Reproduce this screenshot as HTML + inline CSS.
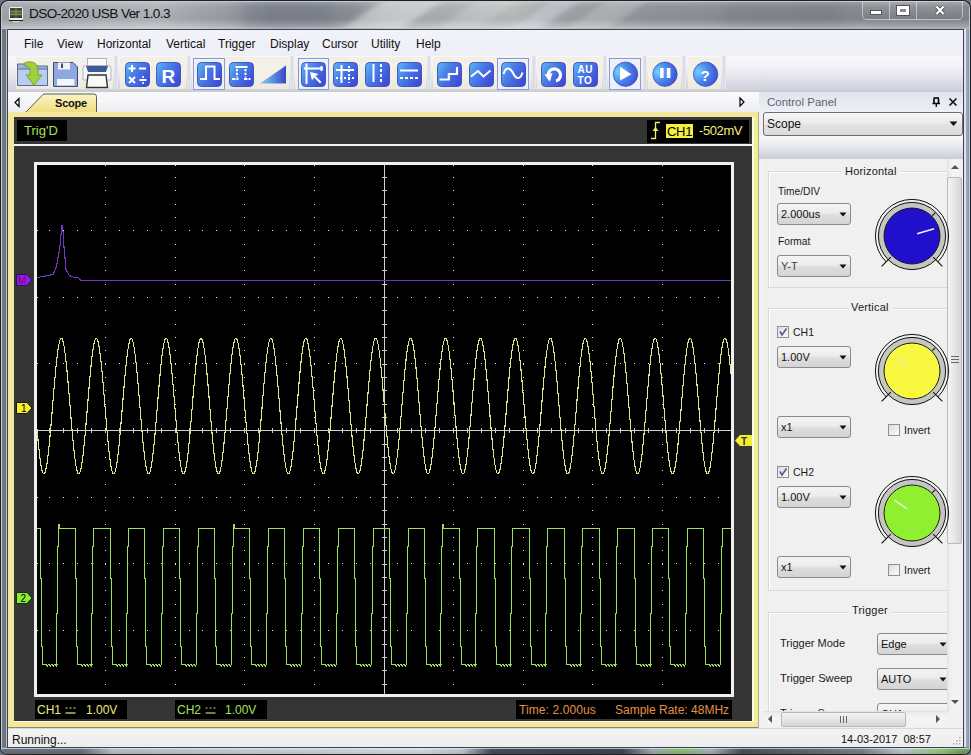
<!DOCTYPE html><html><head><meta charset="utf-8"><style>
*{margin:0;padding:0;box-sizing:border-box}
html,body{width:971px;height:755px;overflow:hidden}
body{position:relative;background:#6f7683;font-family:"Liberation Sans",sans-serif;color:#000}
.a{position:absolute}
.t{position:absolute;white-space:pre;line-height:1}
</style></head><body><div class="a" style="left:0;top:0;width:971px;height:755px;background:#1e2024;border-radius:8px 8px 7px 7px"></div>
<div class="a" style="left:1px;top:1px;width:969px;height:753px;border-radius:7px 7px 6px 6px;border:1px solid #c4c8d0;background:linear-gradient(180deg,#8d929a 0,#8d929a 28px,#70788a 40px,#76809a 100%)"></div>
<div class="a" style="left:2px;top:2px;width:967px;height:27px;border-top-left-radius:6px;border-top-right-radius:6px;background:linear-gradient(90deg,#a0a4aa 0%,#b2b5ba 16%,#9a9ea5 23%,#868b94 28%,#8a8f97 36%,#a4a7ab 40%,#b0b2b5 47%,#bbbcbc 53%,#a0a3a7 58%,#90949a 68%,#888c93 85%,#82878e 100%)"></div>
<div class="a" style="left:2px;top:2px;width:967px;height:27px;border-top-left-radius:6px;border-top-right-radius:6px;background:linear-gradient(180deg,rgba(255,255,255,.18) 0px,rgba(0,0,0,0) 5px,rgba(0,0,0,.04) 17px,rgba(255,255,255,.22) 24px,rgba(255,255,255,.35) 26px,rgba(255,255,255,.35) 27px)"></div>
<div class="a" style="left:2px;top:29px;width:5px;height:718px;background:linear-gradient(90deg,#737a86,#6a7280 70%,#c0c4cc 80%)"></div>
<div class="a" style="left:964px;top:29px;width:5px;height:718px;background:linear-gradient(90deg,#dde1ea 0,#dde1ea 1.5px,#a2adc4 2px,#8a97b2 100%)"></div>
<div class="a" style="left:2px;top:748px;width:967px;height:6px;border-radius:0 0 5px 5px;background:linear-gradient(90deg,#687080 0px,#6a7280 80px,#b8c0cc 110px,#c8d0dc 250px,#d4dce8 420px,#c0c8d4 460px,#444c5c 490px,#3e4656 620px,#a0a8b4 650px,#88c070 680px,#a8b0b8 710px,#48505c 740px,#606870 800px,#7a828c 860px,#c0c8d0 900px,#90c878 940px,#70a060 960px)"></div>
<div class="a" style="left:2px;top:748px;width:967px;height:6px;border-radius:0 0 5px 5px;background:linear-gradient(180deg,rgba(230,234,240,.7) 0,rgba(230,234,240,.7) 1px,rgba(0,0,0,0) 1px,rgba(0,0,0,.1) 100%)"></div>
<div class="a" style="left:7px;top:29px;width:957px;height:719px;border:1px solid #3c4450"></div>
<div class="a" style="left:2px;top:2px;width:967px;height:26px;overflow:hidden;border-top-left-radius:6px;border-top-right-radius:6px"><div class="a" style="left:360px;top:-4px;width:60px;height:34px;background:rgba(255,255,255,.38);transform:skewX(-55deg);filter:blur(5px)"></div><div class="a" style="left:455px;top:-4px;width:40px;height:34px;background:rgba(255,255,255,.18);transform:skewX(-55deg);filter:blur(5px)"></div><div class="a" style="left:530px;top:-4px;width:28px;height:34px;background:rgba(225,235,255,.35);transform:skewX(-55deg);filter:blur(4px)"></div><div class="a" style="left:585px;top:-4px;width:40px;height:34px;background:rgba(255,255,255,.2);transform:skewX(-55deg);filter:blur(5px)"></div><div class="a" style="left:240px;top:0px;width:90px;height:26px;background:rgba(50,60,80,.12);filter:blur(6px)"></div><div class="a" style="left:720px;top:0px;width:120px;height:26px;background:rgba(50,55,65,.1);filter:blur(8px)"></div></div>
<div class="a" style="left:9px;top:7px;width:14px;height:13px;border-radius:2px;background:#f0f0f0"></div>
<div class="a" style="left:10px;top:8px;width:12px;height:10px;background:linear-gradient(180deg,#3c4430 0%,#5a6a40 55%,#2c3424 100%)"></div>
<svg class="a" style="left:10px;top:8px" width="12" height="10"><path d="M1 3.5 H11 M1 6.5 H11 M6 0 V10" stroke="#a8b880" stroke-width="0.8" opacity="0.7"/></svg>
<div class="a" style="left:9px;top:20px;width:14px;height:1px;background:#202020"></div>
<div class="a" style="left:13px;top:21px;width:6px;height:1px;background:#d8dce0"></div>
<div class="t" style="left:29px;top:7px;font-size:13.6px;letter-spacing:-0.6px;color:#111">DSO-2020 USB Ver 1.0.3</div>
<div class="a" style="left:862px;top:1px;width:101px;height:19px;border:1px solid rgba(230,230,235,.6);border-top:none;border-radius:0 0 5px 5px;background:linear-gradient(180deg,rgba(255,255,255,.15),rgba(0,0,0,.05))"></div>
<div class="a" style="left:889px;top:1px;width:1px;height:18px;background:rgba(230,230,235,.6)"></div>
<div class="a" style="left:916px;top:1px;width:1px;height:18px;background:rgba(230,230,235,.6)"></div>
<div class="a" style="left:870px;top:10px;width:12px;height:5px;background:#fff;border:1px solid #555"></div>
<div class="a" style="left:897px;top:6px;width:12px;height:9px;border:3px solid #fff;outline:1px solid #555"></div>
<svg class="a" style="left:933px;top:4px" width="14" height="13"><path d="M3.5 2.5 L10.5 10 M10.5 2.5 L3.5 10" stroke="#4a4a4a" stroke-width="3.8"/><path d="M3.5 2.5 L10.5 10 M10.5 2.5 L3.5 10" stroke="#fff" stroke-width="2.2"/></svg>
<div class="a" style="left:8px;top:30px;width:955px;height:717px;background:#f0f0f0"></div>
<div class="a" style="left:8px;top:30px;width:955px;height:26px;background:linear-gradient(180deg,#f2f2f9,#eeeef7)"></div>
<div class="t" style="left:24px;top:38px;font-size:12px;color:#111">File</div>
<div class="t" style="left:57px;top:38px;font-size:12px;color:#111">View</div>
<div class="t" style="left:97px;top:38px;font-size:12px;color:#111">Horizontal</div>
<div class="t" style="left:166px;top:38px;font-size:12px;color:#111">Vertical</div>
<div class="t" style="left:218px;top:38px;font-size:12px;color:#111">Trigger</div>
<div class="t" style="left:270px;top:38px;font-size:12px;color:#111">Display</div>
<div class="t" style="left:322px;top:38px;font-size:12px;color:#111">Cursor</div>
<div class="t" style="left:371px;top:38px;font-size:12px;color:#111">Utility</div>
<div class="t" style="left:416px;top:38px;font-size:12px;color:#111">Help</div>
<div class="a" style="left:8px;top:56px;width:955px;height:36px;background:linear-gradient(180deg,#f8f8fb 0%,#f2f2f7 30%,#dedee8 70%,#cdcdda 100%)"></div>
<div class="a" style="left:8px;top:91px;width:955px;height:1px;background:#c4c8d2"></div>
<div class="a" style="left:16px;top:57px;width:97px;height:33px;background:linear-gradient(180deg,#f1efe6 0%,#f3f1e8 60%,#ebe8dc 100%)"></div>
<div class="a" style="left:120px;top:57px;width:66px;height:33px;background:linear-gradient(180deg,#f1efe6 0%,#f3f1e8 60%,#ebe8dc 100%)"></div>
<div class="a" style="left:192px;top:57px;width:97px;height:33px;background:linear-gradient(180deg,#f1efe6 0%,#f3f1e8 60%,#ebe8dc 100%)"></div>
<div class="a" style="left:295px;top:57px;width:131px;height:33px;background:linear-gradient(180deg,#f1efe6 0%,#f3f1e8 60%,#ebe8dc 100%)"></div>
<div class="a" style="left:433px;top:57px;width:98px;height:33px;background:linear-gradient(180deg,#f1efe6 0%,#f3f1e8 60%,#ebe8dc 100%)"></div>
<div class="a" style="left:537px;top:57px;width:65px;height:33px;background:linear-gradient(180deg,#f1efe6 0%,#f3f1e8 60%,#ebe8dc 100%)"></div>
<div class="a" style="left:608px;top:57px;width:35px;height:33px;background:linear-gradient(180deg,#f1efe6 0%,#f3f1e8 60%,#ebe8dc 100%)"></div>
<div class="a" style="left:648px;top:57px;width:33px;height:33px;background:linear-gradient(180deg,#f1efe6 0%,#f3f1e8 60%,#ebe8dc 100%)"></div>
<div class="a" style="left:688px;top:57px;width:33px;height:33px;background:linear-gradient(180deg,#f1efe6 0%,#f3f1e8 60%,#ebe8dc 100%)"></div>
<div class="a" style="left:114px;top:56px;width:4px;height:35px;background:linear-gradient(90deg,#e8e8ee,#d6d8e2 50%,#eeeef4)"></div>
<div class="a" style="left:187px;top:56px;width:4px;height:35px;background:linear-gradient(90deg,#e8e8ee,#d6d8e2 50%,#eeeef4)"></div>
<div class="a" style="left:290px;top:56px;width:4px;height:35px;background:linear-gradient(90deg,#e8e8ee,#d6d8e2 50%,#eeeef4)"></div>
<div class="a" style="left:427px;top:56px;width:4px;height:35px;background:linear-gradient(90deg,#e8e8ee,#d6d8e2 50%,#eeeef4)"></div>
<div class="a" style="left:532px;top:56px;width:4px;height:35px;background:linear-gradient(90deg,#e8e8ee,#d6d8e2 50%,#eeeef4)"></div>
<div class="a" style="left:603px;top:56px;width:4px;height:35px;background:linear-gradient(90deg,#e8e8ee,#d6d8e2 50%,#eeeef4)"></div>
<div class="a" style="left:643px;top:56px;width:4px;height:35px;background:linear-gradient(90deg,#e8e8ee,#d6d8e2 50%,#eeeef4)"></div>
<div class="a" style="left:682px;top:56px;width:4px;height:35px;background:linear-gradient(90deg,#e8e8ee,#d6d8e2 50%,#eeeef4)"></div>
<div class="a" style="left:722px;top:56px;width:4px;height:35px;background:linear-gradient(90deg,#e8e8ee,#d6d8e2 50%,#eeeef4)"></div>
<div class="a" style="left:8px;top:89px;width:955px;height:3px;background:linear-gradient(180deg,#d4d6de,#c6c8d2)"></div>
<div class="a" style="left:193px;top:58px;width:32px;height:32px;border:1px solid #8a9ae0;background:#eef0f8"></div>
<div class="a" style="left:298px;top:58px;width:31px;height:32px;border:1px solid #8a9ae0;background:#eef0f8"></div>
<div class="a" style="left:497px;top:58px;width:32px;height:32px;border:1px solid #8a9ae0;background:#eef0f8"></div>
<div class="a" style="left:609px;top:58px;width:32px;height:32px;border:1px solid #8a9ae0;background:#eef0f8"></div>
<svg class="a" style="left:0;top:0" width="971" height="100"><defs><linearGradient id="bg1" x1="0" y1="0" x2="1" y2="0.6"><stop offset="0" stop-color="#5cbaf6"/><stop offset="0.45" stop-color="#4a7ee8"/><stop offset="1" stop-color="#3d4fd8"/></linearGradient><radialGradient id="cg1" cx="0.2" cy="0.4" r="0.9"><stop offset="0" stop-color="#70d0ff"/><stop offset="0.5" stop-color="#4a80e8"/><stop offset="1" stop-color="#3a48d0"/></radialGradient><linearGradient id="ramp" x1="0" y1="0" x2="1" y2="0"><stop offset="0" stop-color="#80d0f8"/><stop offset="1" stop-color="#3848c8"/></linearGradient></defs><rect x="125.5" y="62.5" width="24" height="24" rx="4" fill="url(#bg1)" stroke="#3040b0" stroke-width="0.8"/><path d="M128.5 68.5 H135.5 M132 65 V72 M139 68.5 H146 M129 77 L135 83 M135 77 L129 83 M139.5 80 H146.5" stroke="#fff" fill="none" stroke-width="2"/><circle cx="143" cy="77" r="1.1" fill="#fff"/><circle cx="143" cy="83" r="1.1" fill="#fff"/><rect x="156.5" y="62.5" width="24" height="24" rx="4" fill="url(#bg1)" stroke="#3040b0" stroke-width="0.8"/><text x="161.5" y="83" font-family="Liberation Sans" font-weight="bold" font-size="19" fill="#fff">R</text><rect x="197.5" y="62.5" width="24" height="24" rx="4" fill="url(#bg1)" stroke="#3040b0" stroke-width="0.8"/><path d="M200 79 H206 V66.5 H214.5 V79 H220" stroke="#fff" fill="none" stroke-width="2"/><rect x="229.5" y="62.5" width="24" height="24" rx="4" fill="url(#bg1)" stroke="#3040b0" stroke-width="0.8"/><path d="M235.5 67 H247.5" stroke="#fff" fill="none" stroke-width="2"/><path d="M237 69 V77.5 M245.5 69 V77.5" stroke="#fff" fill="none" stroke-width="2" stroke-dasharray="2.2 1.6"/><path d="M232 79 H238.5 M244 79 H250.5" stroke="#fff" fill="none" stroke-width="2" stroke-dasharray="3.5 1"/><path d="M260 83.5 L286 65.5 L286 83.5 Z" fill="url(#ramp)"/><rect x="301.5" y="62.5" width="24" height="24" rx="4" fill="url(#bg1)" stroke="#3040b0" stroke-width="0.8"/><path d="M306.5 63.5 V84 M304 68.5 H323 M321.5 66 V71" stroke="#fff" fill="none" stroke-width="2"/><path d="M310 72 L318.5 74 L315.5 76 L321.5 82 L320 83.5 L314 77.5 L312 80.5 Z" fill="#fff"/><rect x="333.5" y="62.5" width="24" height="24" rx="4" fill="url(#bg1)" stroke="#3040b0" stroke-width="0.8"/><path d="M341.5 65 V83 M336 70 H354" stroke="#fff" fill="none" stroke-width="2"/><path d="M349 66 V83 M336 78 H354" stroke="#fff" fill="none" stroke-width="2" stroke-dasharray="2 2"/><rect x="365.5" y="62.5" width="24" height="24" rx="4" fill="url(#bg1)" stroke="#3040b0" stroke-width="0.8"/><path d="M373.5 64 V82" stroke="#fff" fill="none" stroke-width="2"/><path d="M381 64 V82" stroke="#fff" fill="none" stroke-width="2" stroke-dasharray="3 2"/><rect x="397.5" y="62.5" width="24" height="24" rx="4" fill="url(#bg1)" stroke="#3040b0" stroke-width="0.8"/><path d="M400 70.5 H418" stroke="#fff" fill="none" stroke-width="2"/><path d="M400 78 H418" stroke="#fff" fill="none" stroke-width="2" stroke-dasharray="3 2"/><rect x="437.5" y="62.5" width="24" height="24" rx="4" fill="url(#bg1)" stroke="#3040b0" stroke-width="0.8"/><path d="M439.5 79.5 H448.8 V74 H457 V67" stroke="#fff" fill="none" stroke-width="2.2"/><rect x="469.5" y="62.5" width="24" height="24" rx="4" fill="url(#bg1)" stroke="#3040b0" stroke-width="0.8"/><path d="M471 76.5 L478 71 L483.5 76.5 L490.5 70.5" stroke="#fff" fill="none" stroke-width="2"/><rect x="501.5" y="62.5" width="24" height="24" rx="4" fill="url(#bg1)" stroke="#3040b0" stroke-width="0.8"/><path d="M503.5 74 C505.5 67, 509.5 66.5, 513 73 C516 79.5, 520.5 80, 522.5 72.5" stroke="#fff" fill="none" stroke-width="2"/><rect x="541.5" y="62.5" width="24" height="24" rx="4" fill="url(#bg1)" stroke="#3040b0" stroke-width="0.8"/><path d="M550 79.5 A6.2 6.2 0 1 1 556 81" stroke="#fff" fill="none" stroke-width="3.2"/><path d="M544.5 74.5 L552.5 73 L550 81.5 Z" fill="#fff"/><rect x="573.5" y="62.5" width="24" height="24" rx="4" fill="url(#bg1)" stroke="#3040b0" stroke-width="0.8"/><text x="577.5" y="73" font-family="Liberation Sans" font-weight="bold" font-size="10" fill="#fff" letter-spacing="0.5">AU</text><text x="577.5" y="84" font-family="Liberation Sans" font-weight="bold" font-size="10" fill="#fff" letter-spacing="0.5">TO</text><circle cx="625.5" cy="74.2" r="12.2" fill="url(#cg1)" stroke="#3848b8" stroke-width="0.7"/><circle cx="665" cy="74.2" r="12.2" fill="url(#cg1)" stroke="#3848b8" stroke-width="0.7"/><circle cx="705.6" cy="74.2" r="12.2" fill="url(#cg1)" stroke="#3848b8" stroke-width="0.7"/><path d="M620 66.8 L631.5 74.3 L620 80.5 Z" fill="#fff"/><rect x="660" y="68" width="3.6" height="10" fill="#fff"/><rect x="666.8" y="68" width="3.6" height="10" fill="#fff"/><text x="700.5" y="80.5" font-family="Liberation Sans" font-weight="bold" font-size="15" fill="#fff">?</text><path d="M17.5 64 H28 L30 66 H47.5 V85.5 H17.5 Z" fill="#9bb4e4" stroke="#5a6c90" stroke-width="1"/><path d="M17.5 69 H47.5 V85.5 H17.5 Z" fill="#b8cdf0" stroke="#5a6c90" stroke-width="1"/><path d="M25 62.5 C33 60.5, 38 63, 38 71 V75 H42 L34 85.5 L26 75 H30 V71 C30 67, 28 66, 25 66.5 Z" fill="#9ed040" stroke="#6a9a20" stroke-width="0.8"/><path d="M53.5 62.5 H73 L77.5 67 V86.5 H53.5 Z" fill="#8fa8e0" stroke="#3c4a78" stroke-width="1"/><rect x="58" y="62.5" width="12" height="7" fill="#eef2fa"/><rect x="61" y="63.5" width="2" height="4.5" fill="#3c4a78"/><rect x="57" y="79" width="17.5" height="6.5" fill="#f4f6fb"/><rect x="87.5" y="58.5" width="19" height="8" fill="#fafafa" stroke="#9aa" stroke-width="0.8"/><path d="M83 68 Q83 65.5 86 65.5 H108 Q111 65.5 111 68 V80 H83 Z" fill="#f4f6fa" stroke="#a8aab0" stroke-width="0.8"/><path d="M86 66 H108 L106 72 H88 Z" fill="#3e5a9a"/><path d="M88 75 H106 L107.5 87.5 H86.5 Z" fill="#f8f8f8" stroke="#333" stroke-width="1.4"/></svg>
<div class="a" style="left:8px;top:92px;width:751px;height:21px;background:linear-gradient(180deg,#fafafb,#eeeef2)"></div>
<svg class="a" style="left:13px;top:97px" width="8" height="11"><path d="M6 1.5 L2 5.5 L6 9.5 Z" fill="#fff" stroke="#000" stroke-width="1.2"/></svg>
<svg class="a" style="left:737px;top:96px" width="10" height="12"><path d="M3 2 L7 6 L3 10 Z" fill="#fff" stroke="#000" stroke-width="1.2"/></svg>
<svg class="a" style="left:20px;top:93px" width="80" height="21"><defs><linearGradient id="tabg" x1="0" y1="0" x2="0" y2="1"><stop offset="0" stop-color="#fbf4c4"/><stop offset="1" stop-color="#eedc80"/></linearGradient></defs><path d="M5 20 L23 1.5 Q24 1 26 1 L74 1 Q76.5 1 76.5 3.5 L76.5 20 Z" fill="url(#tabg)" stroke="#5a5a50" stroke-width="1"/></svg>
<div class="t" style="left:55px;top:98px;font-size:11px;font-weight:bold;letter-spacing:-0.2px;color:#111">Scope</div>
<div class="a" style="left:8px;top:112px;width:751px;height:617px;background:#f2e79c"></div>
<div class="a" style="left:14px;top:117px;width:738px;height:604px;background:#353535"></div>
<div class="a" style="left:14px;top:721px;width:738px;height:1px;background:#fafae6"></div>
<div class="a" style="left:752px;top:117px;width:2px;height:605px;background:#fafae6"></div>
<div class="a" style="left:8px;top:727px;width:751px;height:1px;background:#8a8670"></div>
<div class="a" style="left:754px;top:117px;width:4px;height:605px;background:#f2f08e"></div>
<div class="a" style="left:758px;top:112px;width:1px;height:616px;background:#b0aca0"></div>
<div class="a" style="left:17px;top:120px;width:50px;height:21px;background:#000"></div>
<div class="t" style="left:24px;top:124px;font-size:13px;color:#a6e05a">Trig'D</div>
<div class="a" style="left:14px;top:144px;width:738px;height:2px;background:#f4f4f4"></div>
<div class="a" style="left:647px;top:120px;width:102px;height:23px;background:#000"></div>
<svg class="a" style="left:649px;top:121px" width="14" height="19"><path d="M2 17.5 L6.5 17.5 L6.5 1.5 L11 1.5" fill="none" stroke="#f0f070" stroke-width="1.3"/><path d="M3.5 10 L6.5 6 L9.5 10 Z" fill="#f0f070"/></svg>
<div class="a" style="left:666px;top:124px;width:27px;height:14px;background:#f4f040"></div>
<div class="t" style="left:667px;top:125px;font-size:13px;letter-spacing:-0.3px;color:#000">CH1</div>
<div class="t" style="left:699px;top:124px;font-size:13px;letter-spacing:-0.4px;color:#f0ef78">-502mV</div>
<div class="a" style="left:34px;top:162px;width:700px;height:535px;background:#000;border:3px solid #f0f0f0"></div>
<div class="a" style="left:35px;top:700px;width:92px;height:19px;background:#000"></div>
<div class="t" style="left:37px;top:704px;font-size:12px;color:#ecec78">CH1</div>
<svg class="a" style="left:64px;top:703px" width="14" height="12"><path d="M1.5 10 H11.5" stroke="#ecec78" stroke-width="1.2"/><path d="M1.5 5 H11.5" stroke="#ecec78" stroke-width="1" stroke-dasharray="2 2"/></svg>
<div class="t" style="left:86px;top:704px;font-size:12px;color:#ecec78">1.00V</div>
<div class="a" style="left:175px;top:700px;width:92px;height:19px;background:#000"></div>
<div class="t" style="left:177px;top:704px;font-size:12px;color:#a6e05a">CH2</div>
<svg class="a" style="left:204px;top:703px" width="14" height="12"><path d="M1.5 10 H11.5" stroke="#a6e05a" stroke-width="1.2"/><path d="M1.5 5 H11.5" stroke="#a6e05a" stroke-width="1" stroke-dasharray="2 2"/></svg>
<div class="t" style="left:225px;top:704px;font-size:12px;color:#a6e05a">1.00V</div>
<div class="a" style="left:516px;top:700px;width:216px;height:19px;background:#000"></div>
<div class="t" style="left:519px;top:704px;font-size:12px;letter-spacing:0.1px;color:#e0924a">Time: 2.000us</div>
<div class="t" style="left:615px;top:704px;font-size:12px;color:#e0924a">Sample Rate: 48MHz</div>
<svg class="a" style="left:0;top:0" width="971" height="755" shape-rendering="crispEdges"><path d="M105 177h1v1h-1zM105 190h1v1h-1zM105 204h1v1h-1zM105 217h1v1h-1zM105 230h1v1h-1zM105 244h1v1h-1zM105 257h1v1h-1zM105 270h1v1h-1zM105 284h1v1h-1zM105 297h1v1h-1zM105 310h1v1h-1zM105 324h1v1h-1zM105 337h1v1h-1zM105 350h1v1h-1zM105 364h1v1h-1zM105 377h1v1h-1zM105 390h1v1h-1zM105 404h1v1h-1zM105 417h1v1h-1zM105 430h1v1h-1zM105 444h1v1h-1zM105 457h1v1h-1zM105 470h1v1h-1zM105 484h1v1h-1zM105 497h1v1h-1zM105 510h1v1h-1zM105 524h1v1h-1zM105 537h1v1h-1zM105 550h1v1h-1zM105 564h1v1h-1zM105 577h1v1h-1zM105 590h1v1h-1zM105 604h1v1h-1zM105 617h1v1h-1zM105 630h1v1h-1zM105 644h1v1h-1zM105 657h1v1h-1zM105 670h1v1h-1zM105 684h1v1h-1zM175 177h1v1h-1zM175 190h1v1h-1zM175 204h1v1h-1zM175 217h1v1h-1zM175 230h1v1h-1zM175 244h1v1h-1zM175 257h1v1h-1zM175 270h1v1h-1zM175 284h1v1h-1zM175 297h1v1h-1zM175 310h1v1h-1zM175 324h1v1h-1zM175 337h1v1h-1zM175 350h1v1h-1zM175 364h1v1h-1zM175 377h1v1h-1zM175 390h1v1h-1zM175 404h1v1h-1zM175 417h1v1h-1zM175 430h1v1h-1zM175 444h1v1h-1zM175 457h1v1h-1zM175 470h1v1h-1zM175 484h1v1h-1zM175 497h1v1h-1zM175 510h1v1h-1zM175 524h1v1h-1zM175 537h1v1h-1zM175 550h1v1h-1zM175 564h1v1h-1zM175 577h1v1h-1zM175 590h1v1h-1zM175 604h1v1h-1zM175 617h1v1h-1zM175 630h1v1h-1zM175 644h1v1h-1zM175 657h1v1h-1zM175 670h1v1h-1zM175 684h1v1h-1zM244 177h1v1h-1zM244 190h1v1h-1zM244 204h1v1h-1zM244 217h1v1h-1zM244 230h1v1h-1zM244 244h1v1h-1zM244 257h1v1h-1zM244 270h1v1h-1zM244 284h1v1h-1zM244 297h1v1h-1zM244 310h1v1h-1zM244 324h1v1h-1zM244 337h1v1h-1zM244 350h1v1h-1zM244 364h1v1h-1zM244 377h1v1h-1zM244 390h1v1h-1zM244 404h1v1h-1zM244 417h1v1h-1zM244 430h1v1h-1zM244 444h1v1h-1zM244 457h1v1h-1zM244 470h1v1h-1zM244 484h1v1h-1zM244 497h1v1h-1zM244 510h1v1h-1zM244 524h1v1h-1zM244 537h1v1h-1zM244 550h1v1h-1zM244 564h1v1h-1zM244 577h1v1h-1zM244 590h1v1h-1zM244 604h1v1h-1zM244 617h1v1h-1zM244 630h1v1h-1zM244 644h1v1h-1zM244 657h1v1h-1zM244 670h1v1h-1zM244 684h1v1h-1zM314 177h1v1h-1zM314 190h1v1h-1zM314 204h1v1h-1zM314 217h1v1h-1zM314 230h1v1h-1zM314 244h1v1h-1zM314 257h1v1h-1zM314 270h1v1h-1zM314 284h1v1h-1zM314 297h1v1h-1zM314 310h1v1h-1zM314 324h1v1h-1zM314 337h1v1h-1zM314 350h1v1h-1zM314 364h1v1h-1zM314 377h1v1h-1zM314 390h1v1h-1zM314 404h1v1h-1zM314 417h1v1h-1zM314 430h1v1h-1zM314 444h1v1h-1zM314 457h1v1h-1zM314 470h1v1h-1zM314 484h1v1h-1zM314 497h1v1h-1zM314 510h1v1h-1zM314 524h1v1h-1zM314 537h1v1h-1zM314 550h1v1h-1zM314 564h1v1h-1zM314 577h1v1h-1zM314 590h1v1h-1zM314 604h1v1h-1zM314 617h1v1h-1zM314 630h1v1h-1zM314 644h1v1h-1zM314 657h1v1h-1zM314 670h1v1h-1zM314 684h1v1h-1zM453 177h1v1h-1zM453 190h1v1h-1zM453 204h1v1h-1zM453 217h1v1h-1zM453 230h1v1h-1zM453 244h1v1h-1zM453 257h1v1h-1zM453 270h1v1h-1zM453 284h1v1h-1zM453 297h1v1h-1zM453 310h1v1h-1zM453 324h1v1h-1zM453 337h1v1h-1zM453 350h1v1h-1zM453 364h1v1h-1zM453 377h1v1h-1zM453 390h1v1h-1zM453 404h1v1h-1zM453 417h1v1h-1zM453 430h1v1h-1zM453 444h1v1h-1zM453 457h1v1h-1zM453 470h1v1h-1zM453 484h1v1h-1zM453 497h1v1h-1zM453 510h1v1h-1zM453 524h1v1h-1zM453 537h1v1h-1zM453 550h1v1h-1zM453 564h1v1h-1zM453 577h1v1h-1zM453 590h1v1h-1zM453 604h1v1h-1zM453 617h1v1h-1zM453 630h1v1h-1zM453 644h1v1h-1zM453 657h1v1h-1zM453 670h1v1h-1zM453 684h1v1h-1zM523 177h1v1h-1zM523 190h1v1h-1zM523 204h1v1h-1zM523 217h1v1h-1zM523 230h1v1h-1zM523 244h1v1h-1zM523 257h1v1h-1zM523 270h1v1h-1zM523 284h1v1h-1zM523 297h1v1h-1zM523 310h1v1h-1zM523 324h1v1h-1zM523 337h1v1h-1zM523 350h1v1h-1zM523 364h1v1h-1zM523 377h1v1h-1zM523 390h1v1h-1zM523 404h1v1h-1zM523 417h1v1h-1zM523 430h1v1h-1zM523 444h1v1h-1zM523 457h1v1h-1zM523 470h1v1h-1zM523 484h1v1h-1zM523 497h1v1h-1zM523 510h1v1h-1zM523 524h1v1h-1zM523 537h1v1h-1zM523 550h1v1h-1zM523 564h1v1h-1zM523 577h1v1h-1zM523 590h1v1h-1zM523 604h1v1h-1zM523 617h1v1h-1zM523 630h1v1h-1zM523 644h1v1h-1zM523 657h1v1h-1zM523 670h1v1h-1zM523 684h1v1h-1zM592 177h1v1h-1zM592 190h1v1h-1zM592 204h1v1h-1zM592 217h1v1h-1zM592 230h1v1h-1zM592 244h1v1h-1zM592 257h1v1h-1zM592 270h1v1h-1zM592 284h1v1h-1zM592 297h1v1h-1zM592 310h1v1h-1zM592 324h1v1h-1zM592 337h1v1h-1zM592 350h1v1h-1zM592 364h1v1h-1zM592 377h1v1h-1zM592 390h1v1h-1zM592 404h1v1h-1zM592 417h1v1h-1zM592 430h1v1h-1zM592 444h1v1h-1zM592 457h1v1h-1zM592 470h1v1h-1zM592 484h1v1h-1zM592 497h1v1h-1zM592 510h1v1h-1zM592 524h1v1h-1zM592 537h1v1h-1zM592 550h1v1h-1zM592 564h1v1h-1zM592 577h1v1h-1zM592 590h1v1h-1zM592 604h1v1h-1zM592 617h1v1h-1zM592 630h1v1h-1zM592 644h1v1h-1zM592 657h1v1h-1zM592 670h1v1h-1zM592 684h1v1h-1zM662 177h1v1h-1zM662 190h1v1h-1zM662 204h1v1h-1zM662 217h1v1h-1zM662 230h1v1h-1zM662 244h1v1h-1zM662 257h1v1h-1zM662 270h1v1h-1zM662 284h1v1h-1zM662 297h1v1h-1zM662 310h1v1h-1zM662 324h1v1h-1zM662 337h1v1h-1zM662 350h1v1h-1zM662 364h1v1h-1zM662 377h1v1h-1zM662 390h1v1h-1zM662 404h1v1h-1zM662 417h1v1h-1zM662 430h1v1h-1zM662 444h1v1h-1zM662 457h1v1h-1zM662 470h1v1h-1zM662 484h1v1h-1zM662 497h1v1h-1zM662 510h1v1h-1zM662 524h1v1h-1zM662 537h1v1h-1zM662 550h1v1h-1zM662 564h1v1h-1zM662 577h1v1h-1zM662 590h1v1h-1zM662 604h1v1h-1zM662 617h1v1h-1zM662 630h1v1h-1zM662 644h1v1h-1zM662 657h1v1h-1zM662 670h1v1h-1zM662 684h1v1h-1zM49 230h1v1h-1zM63 230h1v1h-1zM77 230h1v1h-1zM91 230h1v1h-1zM105 230h1v1h-1zM119 230h1v1h-1zM133 230h1v1h-1zM147 230h1v1h-1zM161 230h1v1h-1zM175 230h1v1h-1zM189 230h1v1h-1zM202 230h1v1h-1zM216 230h1v1h-1zM230 230h1v1h-1zM244 230h1v1h-1zM258 230h1v1h-1zM272 230h1v1h-1zM286 230h1v1h-1zM300 230h1v1h-1zM314 230h1v1h-1zM328 230h1v1h-1zM342 230h1v1h-1zM356 230h1v1h-1zM370 230h1v1h-1zM384 230h1v1h-1zM397 230h1v1h-1zM411 230h1v1h-1zM425 230h1v1h-1zM439 230h1v1h-1zM453 230h1v1h-1zM467 230h1v1h-1zM481 230h1v1h-1zM495 230h1v1h-1zM509 230h1v1h-1zM523 230h1v1h-1zM537 230h1v1h-1zM551 230h1v1h-1zM565 230h1v1h-1zM578 230h1v1h-1zM592 230h1v1h-1zM606 230h1v1h-1zM620 230h1v1h-1zM634 230h1v1h-1zM648 230h1v1h-1zM662 230h1v1h-1zM676 230h1v1h-1zM690 230h1v1h-1zM704 230h1v1h-1zM718 230h1v1h-1zM49 297h1v1h-1zM63 297h1v1h-1zM77 297h1v1h-1zM91 297h1v1h-1zM105 297h1v1h-1zM119 297h1v1h-1zM133 297h1v1h-1zM147 297h1v1h-1zM161 297h1v1h-1zM175 297h1v1h-1zM189 297h1v1h-1zM202 297h1v1h-1zM216 297h1v1h-1zM230 297h1v1h-1zM244 297h1v1h-1zM258 297h1v1h-1zM272 297h1v1h-1zM286 297h1v1h-1zM300 297h1v1h-1zM314 297h1v1h-1zM328 297h1v1h-1zM342 297h1v1h-1zM356 297h1v1h-1zM370 297h1v1h-1zM384 297h1v1h-1zM397 297h1v1h-1zM411 297h1v1h-1zM425 297h1v1h-1zM439 297h1v1h-1zM453 297h1v1h-1zM467 297h1v1h-1zM481 297h1v1h-1zM495 297h1v1h-1zM509 297h1v1h-1zM523 297h1v1h-1zM537 297h1v1h-1zM551 297h1v1h-1zM565 297h1v1h-1zM578 297h1v1h-1zM592 297h1v1h-1zM606 297h1v1h-1zM620 297h1v1h-1zM634 297h1v1h-1zM648 297h1v1h-1zM662 297h1v1h-1zM676 297h1v1h-1zM690 297h1v1h-1zM704 297h1v1h-1zM718 297h1v1h-1zM49 363h1v1h-1zM63 363h1v1h-1zM77 363h1v1h-1zM91 363h1v1h-1zM105 363h1v1h-1zM119 363h1v1h-1zM133 363h1v1h-1zM147 363h1v1h-1zM161 363h1v1h-1zM175 363h1v1h-1zM189 363h1v1h-1zM202 363h1v1h-1zM216 363h1v1h-1zM230 363h1v1h-1zM244 363h1v1h-1zM258 363h1v1h-1zM272 363h1v1h-1zM286 363h1v1h-1zM300 363h1v1h-1zM314 363h1v1h-1zM328 363h1v1h-1zM342 363h1v1h-1zM356 363h1v1h-1zM370 363h1v1h-1zM384 363h1v1h-1zM397 363h1v1h-1zM411 363h1v1h-1zM425 363h1v1h-1zM439 363h1v1h-1zM453 363h1v1h-1zM467 363h1v1h-1zM481 363h1v1h-1zM495 363h1v1h-1zM509 363h1v1h-1zM523 363h1v1h-1zM537 363h1v1h-1zM551 363h1v1h-1zM565 363h1v1h-1zM578 363h1v1h-1zM592 363h1v1h-1zM606 363h1v1h-1zM620 363h1v1h-1zM634 363h1v1h-1zM648 363h1v1h-1zM662 363h1v1h-1zM676 363h1v1h-1zM690 363h1v1h-1zM704 363h1v1h-1zM718 363h1v1h-1zM49 497h1v1h-1zM63 497h1v1h-1zM77 497h1v1h-1zM91 497h1v1h-1zM105 497h1v1h-1zM119 497h1v1h-1zM133 497h1v1h-1zM147 497h1v1h-1zM161 497h1v1h-1zM175 497h1v1h-1zM189 497h1v1h-1zM202 497h1v1h-1zM216 497h1v1h-1zM230 497h1v1h-1zM244 497h1v1h-1zM258 497h1v1h-1zM272 497h1v1h-1zM286 497h1v1h-1zM300 497h1v1h-1zM314 497h1v1h-1zM328 497h1v1h-1zM342 497h1v1h-1zM356 497h1v1h-1zM370 497h1v1h-1zM384 497h1v1h-1zM397 497h1v1h-1zM411 497h1v1h-1zM425 497h1v1h-1zM439 497h1v1h-1zM453 497h1v1h-1zM467 497h1v1h-1zM481 497h1v1h-1zM495 497h1v1h-1zM509 497h1v1h-1zM523 497h1v1h-1zM537 497h1v1h-1zM551 497h1v1h-1zM565 497h1v1h-1zM578 497h1v1h-1zM592 497h1v1h-1zM606 497h1v1h-1zM620 497h1v1h-1zM634 497h1v1h-1zM648 497h1v1h-1zM662 497h1v1h-1zM676 497h1v1h-1zM690 497h1v1h-1zM704 497h1v1h-1zM718 497h1v1h-1zM49 563h1v1h-1zM63 563h1v1h-1zM77 563h1v1h-1zM91 563h1v1h-1zM105 563h1v1h-1zM119 563h1v1h-1zM133 563h1v1h-1zM147 563h1v1h-1zM161 563h1v1h-1zM175 563h1v1h-1zM189 563h1v1h-1zM202 563h1v1h-1zM216 563h1v1h-1zM230 563h1v1h-1zM244 563h1v1h-1zM258 563h1v1h-1zM272 563h1v1h-1zM286 563h1v1h-1zM300 563h1v1h-1zM314 563h1v1h-1zM328 563h1v1h-1zM342 563h1v1h-1zM356 563h1v1h-1zM370 563h1v1h-1zM384 563h1v1h-1zM397 563h1v1h-1zM411 563h1v1h-1zM425 563h1v1h-1zM439 563h1v1h-1zM453 563h1v1h-1zM467 563h1v1h-1zM481 563h1v1h-1zM495 563h1v1h-1zM509 563h1v1h-1zM523 563h1v1h-1zM537 563h1v1h-1zM551 563h1v1h-1zM565 563h1v1h-1zM578 563h1v1h-1zM592 563h1v1h-1zM606 563h1v1h-1zM620 563h1v1h-1zM634 563h1v1h-1zM648 563h1v1h-1zM662 563h1v1h-1zM676 563h1v1h-1zM690 563h1v1h-1zM704 563h1v1h-1zM718 563h1v1h-1zM49 630h1v1h-1zM63 630h1v1h-1zM77 630h1v1h-1zM91 630h1v1h-1zM105 630h1v1h-1zM119 630h1v1h-1zM133 630h1v1h-1zM147 630h1v1h-1zM161 630h1v1h-1zM175 630h1v1h-1zM189 630h1v1h-1zM202 630h1v1h-1zM216 630h1v1h-1zM230 630h1v1h-1zM244 630h1v1h-1zM258 630h1v1h-1zM272 630h1v1h-1zM286 630h1v1h-1zM300 630h1v1h-1zM314 630h1v1h-1zM328 630h1v1h-1zM342 630h1v1h-1zM356 630h1v1h-1zM370 630h1v1h-1zM384 630h1v1h-1zM397 630h1v1h-1zM411 630h1v1h-1zM425 630h1v1h-1zM439 630h1v1h-1zM453 630h1v1h-1zM467 630h1v1h-1zM481 630h1v1h-1zM495 630h1v1h-1zM509 630h1v1h-1zM523 630h1v1h-1zM537 630h1v1h-1zM551 630h1v1h-1zM565 630h1v1h-1zM578 630h1v1h-1zM592 630h1v1h-1zM606 630h1v1h-1zM620 630h1v1h-1zM634 630h1v1h-1zM648 630h1v1h-1zM662 630h1v1h-1zM676 630h1v1h-1zM690 630h1v1h-1zM704 630h1v1h-1zM718 630h1v1h-1zM105 165h1v1h-1zM175 165h1v1h-1zM244 165h1v1h-1zM314 165h1v1h-1zM453 165h1v1h-1zM523 165h1v1h-1zM592 165h1v1h-1zM662 165h1v1h-1zM37 230h1v1h-1zM37 297h1v1h-1zM37 363h1v1h-1zM37 497h1v1h-1zM37 563h1v1h-1zM37 630h1v1h-1z" fill="#e8e8e8"/><path d="M384 165h1v529h-1z M37 430h694v1h-694z M382 177h5v1h-5zM382 190h5v1h-5zM382 204h5v1h-5zM382 217h5v1h-5zM382 230h5v1h-5zM382 244h5v1h-5zM382 257h5v1h-5zM382 270h5v1h-5zM382 284h5v1h-5zM382 297h5v1h-5zM382 310h5v1h-5zM382 324h5v1h-5zM382 337h5v1h-5zM382 350h5v1h-5zM382 364h5v1h-5zM382 377h5v1h-5zM382 390h5v1h-5zM382 404h5v1h-5zM382 417h5v1h-5zM382 430h5v1h-5zM382 444h5v1h-5zM382 457h5v1h-5zM382 470h5v1h-5zM382 484h5v1h-5zM382 497h5v1h-5zM382 510h5v1h-5zM382 524h5v1h-5zM382 537h5v1h-5zM382 550h5v1h-5zM382 564h5v1h-5zM382 577h5v1h-5zM382 590h5v1h-5zM382 604h5v1h-5zM382 617h5v1h-5zM382 630h5v1h-5zM382 644h5v1h-5zM382 657h5v1h-5zM382 670h5v1h-5zM382 684h5v1h-5zM49 428h1v5h-1zM63 428h1v5h-1zM77 428h1v5h-1zM91 428h1v5h-1zM105 428h1v5h-1zM119 428h1v5h-1zM133 428h1v5h-1zM147 428h1v5h-1zM161 428h1v5h-1zM175 428h1v5h-1zM189 428h1v5h-1zM202 428h1v5h-1zM216 428h1v5h-1zM230 428h1v5h-1zM244 428h1v5h-1zM258 428h1v5h-1zM272 428h1v5h-1zM286 428h1v5h-1zM300 428h1v5h-1zM314 428h1v5h-1zM328 428h1v5h-1zM342 428h1v5h-1zM356 428h1v5h-1zM370 428h1v5h-1zM384 428h1v5h-1zM397 428h1v5h-1zM411 428h1v5h-1zM425 428h1v5h-1zM439 428h1v5h-1zM453 428h1v5h-1zM467 428h1v5h-1zM481 428h1v5h-1zM495 428h1v5h-1zM509 428h1v5h-1zM523 428h1v5h-1zM537 428h1v5h-1zM551 428h1v5h-1zM565 428h1v5h-1zM578 428h1v5h-1zM592 428h1v5h-1zM606 428h1v5h-1zM620 428h1v5h-1zM634 428h1v5h-1zM648 428h1v5h-1zM662 428h1v5h-1zM676 428h1v5h-1zM690 428h1v5h-1zM704 428h1v5h-1zM718 428h1v5h-1z" fill="#d0d0d0"/></svg>
<svg class="a" style="left:0;top:0" width="971" height="755"><defs><clipPath id="scr"><rect x="37" y="165" width="694" height="529"/></clipPath></defs><g clip-path="url(#scr)" fill="none" stroke-width="1.1" shape-rendering="crispEdges"><path d="M37,277.5 L44,276.4 L53.4,274.3 L56.6,265.8 L59.8,247.8 L61.9,225.5 L62.6,225.5 L64,246.8 L66.1,270 L69.3,275.4 L73.6,277.3 L78.9,278 L81,280.5 L731,280.5" stroke="#7038c0"/><polyline points="37.0,428.8 38.0,439.9 39.0,449.9 40.0,458.5 41.0,465.4 42.0,470.3 43.0,473.2 44.0,474.0 45.0,472.5 46.0,468.9 47.0,463.3 48.0,455.8 49.0,446.7 50.0,436.4 51.0,425.0 52.0,413.0 53.0,400.8 54.0,388.8 55.0,377.3 56.0,366.8 57.0,357.5 58.0,349.8 59.0,343.9 60.0,340.0 61.0,338.3 62.0,338.7 63.0,341.4 64.0,346.1 65.0,352.7 66.0,361.1 67.0,370.9 68.0,381.8 69.0,393.6 70.0,405.7 71.0,417.9 72.0,429.6 73.0,440.6 74.0,450.5 75.0,459.0 76.0,465.8 77.0,470.6 78.0,473.4 79.0,473.9 80.0,472.3 81.0,468.6 82.0,462.8 83.0,455.2 84.0,446.1 85.0,435.6 86.0,424.2 87.0,412.2 88.0,400.0 89.0,388.0 90.0,376.6 91.0,366.1 92.0,356.9 93.0,349.3 94.0,343.6 95.0,339.9 96.0,338.3 97.0,338.9 98.0,341.6 99.0,346.5 100.0,353.2 101.0,361.7 102.0,371.6 103.0,382.6 104.0,394.4 105.0,406.6 106.0,418.7 107.0,430.4 108.0,441.4 109.0,451.2 110.0,459.5 111.0,466.2 112.0,470.9 113.0,473.5 114.0,473.9 115.0,472.1 116.0,468.2 117.0,462.4 118.0,454.6 119.0,445.4 120.0,434.8 121.0,423.3 122.0,411.3 123.0,399.1 124.0,387.1 125.0,375.8 126.0,365.4 127.0,356.3 128.0,348.9 129.0,343.3 130.0,339.7 131.0,338.2 132.0,339.0 133.0,341.9 134.0,346.9 135.0,353.8 136.0,362.3 137.0,372.3 138.0,383.4 139.0,395.2 140.0,407.4 141.0,419.5 142.0,431.2 143.0,442.1 144.0,451.8 145.0,460.1 146.0,466.6 147.0,471.1 148.0,473.6 149.0,473.8 150.0,471.9 151.0,467.9 152.0,461.9 153.0,454.0 154.0,444.7 155.0,434.0 156.0,422.5 157.0,410.5 158.0,398.3 159.0,386.3 160.0,375.0 161.0,364.7 162.0,355.8 163.0,348.4 164.0,342.9 165.0,339.5 166.0,338.2 167.0,339.1 168.0,342.2 169.0,347.3 170.0,354.3 171.0,363.0 172.0,373.1 173.0,384.2 174.0,396.1 175.0,408.3 176.0,420.4 177.0,432.0 178.0,442.8 179.0,452.5 180.0,460.6 181.0,467.0 182.0,471.4 183.0,473.7 184.0,473.8 185.0,471.7 186.0,467.5 187.0,461.4 188.0,453.4 189.0,444.0 190.0,433.3 191.0,421.7 192.0,409.6 193.0,397.4 194.0,385.5 195.0,374.3 196.0,364.1 197.0,355.2 198.0,348.0 199.0,342.6 200.0,339.3 201.0,338.2 202.0,339.3 203.0,342.5 204.0,347.7 205.0,354.9 206.0,363.7 207.0,373.8 208.0,385.0 209.0,396.9 210.0,409.1 211.0,421.2 212.0,432.8 213.0,443.5 214.0,453.1 215.0,461.1 216.0,467.3 217.0,471.6 218.0,473.7 219.0,473.7 220.0,471.5 221.0,467.2 222.0,460.9 223.0,452.8 224.0,443.2 225.0,432.5 226.0,420.9 227.0,408.8 228.0,396.6 229.0,384.7 230.0,373.5 231.0,363.4 232.0,354.6 233.0,347.5 234.0,342.3 235.0,339.2 236.0,338.2 237.0,339.4 238.0,342.8 239.0,348.2 240.0,355.4 241.0,364.3 242.0,374.6 243.0,385.9 244.0,397.8 245.0,410.0 246.0,422.0 247.0,433.6 248.0,444.3 249.0,453.7 250.0,461.6 251.0,467.7 252.0,471.8 253.0,473.8 254.0,473.6 255.0,471.3 256.0,466.8 257.0,460.4 258.0,452.2 259.0,442.5 260.0,431.7 261.0,420.0 262.0,407.9 263.0,395.7 264.0,383.9 265.0,372.8 266.0,362.7 267.0,354.1 268.0,347.1 269.0,342.0 270.0,339.0 271.0,338.2 272.0,339.6 273.0,343.1 274.0,348.6 275.0,356.0 276.0,365.0 277.0,375.4 278.0,386.7 279.0,398.6 280.0,410.8 281.0,422.9 282.0,434.4 283.0,445.0 284.0,454.3 285.0,462.1 286.0,468.0 287.0,472.0 288.0,473.9 289.0,473.5 290.0,471.0 291.0,466.4 292.0,459.8 293.0,451.6 294.0,441.8 295.0,430.9 296.0,419.2 297.0,407.0 298.0,394.9 299.0,383.1 300.0,372.0 301.0,362.1 302.0,353.5 303.0,346.7 304.0,341.8 305.0,338.9 306.0,338.2 307.0,339.7 308.0,343.4 309.0,349.1 310.0,356.6 311.0,365.7 312.0,376.1 313.0,387.5 314.0,399.5 315.0,411.7 316.0,423.7 317.0,435.1 318.0,445.7 319.0,454.9 320.0,462.6 321.0,468.4 322.0,472.2 323.0,473.9 324.0,473.4 325.0,470.8 326.0,466.0 327.0,459.3 328.0,450.9 329.0,441.1 330.0,430.1 331.0,418.3 332.0,406.2 333.0,394.0 334.0,382.3 335.0,371.3 336.0,361.4 337.0,353.0 338.0,346.3 339.0,341.5 340.0,338.8 341.0,338.3 342.0,339.9 343.0,343.7 344.0,349.5 345.0,357.2 346.0,366.4 347.0,376.9 348.0,388.3 349.0,400.3 350.0,412.5 351.0,424.5 352.0,435.9 353.0,446.4 354.0,455.5 355.0,463.0 356.0,468.7 357.0,472.4 358.0,474.0 359.0,473.3 360.0,470.5 361.0,465.6 362.0,458.8 363.0,450.3 364.0,440.3 365.0,429.3 366.0,417.5 367.0,405.3 368.0,393.2 369.0,381.5 370.0,370.6 371.0,360.8 372.0,352.5 373.0,345.9 374.0,341.2 375.0,338.7 376.0,338.3 377.0,340.1 378.0,344.1 379.0,350.0 380.0,357.8 381.0,367.1 382.0,377.7 383.0,389.2 384.0,401.2 385.0,413.4 386.0,425.3 387.0,436.7 388.0,447.0 389.0,456.1 390.0,463.5 391.0,469.1 392.0,472.6 393.0,474.0 394.0,473.2 395.0,470.2 396.0,465.2 397.0,458.2 398.0,449.6 399.0,439.6 400.0,428.5 401.0,416.7 402.0,404.5 403.0,392.4 404.0,380.7 405.0,369.8 406.0,360.1 407.0,351.9 408.0,345.5 409.0,341.0 410.0,338.6 411.0,338.4 412.0,340.3 413.0,344.4 414.0,350.5 415.0,358.4 416.0,367.8 417.0,378.4 418.0,390.0 419.0,402.0 420.0,414.2 421.0,426.2 422.0,437.4 423.0,447.7 424.0,456.6 425.0,463.9 426.0,469.4 427.0,472.8 428.0,474.0 429.0,473.0 430.0,469.9 431.0,464.8 432.0,457.7 433.0,449.0 434.0,438.8 435.0,427.7 436.0,415.8 437.0,403.6 438.0,391.5 439.0,379.9 440.0,369.1 441.0,359.5 442.0,351.4 443.0,345.1 444.0,340.8 445.0,338.5 446.0,338.4 447.0,340.6 448.0,344.8 449.0,351.0 450.0,359.0 451.0,368.5 452.0,379.2 453.0,390.8 454.0,402.9 455.0,415.1 456.0,427.0 457.0,438.2 458.0,448.4 459.0,457.2 460.0,464.4 461.0,469.7 462.0,472.9 463.0,474.0 464.0,472.9 465.0,469.6 466.0,464.3 467.0,457.1 468.0,448.3 469.0,438.1 470.0,426.9 471.0,415.0 472.0,402.8 473.0,390.7 474.0,379.1 475.0,368.4 476.0,358.9 477.0,350.9 478.0,344.7 479.0,340.5 480.0,338.4 481.0,338.5 482.0,340.8 483.0,345.2 484.0,351.5 485.0,359.6 486.0,369.2 487.0,380.0 488.0,391.6 489.0,403.7 490.0,415.9 491.0,427.8 492.0,439.0 493.0,449.1 494.0,457.8 495.0,464.8 496.0,470.0 497.0,473.1 498.0,474.0 499.0,472.7 500.0,469.3 501.0,463.9 502.0,456.6 503.0,447.6 504.0,437.3 505.0,426.0 506.0,414.1 507.0,401.9 508.0,389.9 509.0,378.3 510.0,367.7 511.0,358.3 512.0,350.4 513.0,344.4 514.0,340.3 515.0,338.4 516.0,338.6 517.0,341.0 518.0,345.5 519.0,352.0 520.0,360.2 521.0,369.9 522.0,380.8 523.0,392.5 524.0,404.6 525.0,416.8 526.0,428.6 527.0,439.7 528.0,449.7 529.0,458.3 530.0,465.2 531.0,470.3 532.0,473.2 533.0,474.0 534.0,472.6 535.0,469.0 536.0,463.4 537.0,456.0 538.0,446.9 539.0,436.6 540.0,425.2 541.0,413.3 542.0,401.1 543.0,389.0 544.0,377.6 545.0,367.0 546.0,357.7 547.0,350.0 548.0,344.0 549.0,340.1 550.0,338.3 551.0,338.7 552.0,341.3 553.0,345.9 554.0,352.5 555.0,360.9 556.0,370.7 557.0,381.6 558.0,393.3 559.0,405.5 560.0,417.6 561.0,429.4 562.0,440.4 563.0,450.4 564.0,458.9 565.0,465.7 566.0,470.5 567.0,473.3 568.0,473.9 569.0,472.4 570.0,468.7 571.0,463.0 572.0,455.4 573.0,446.3 574.0,435.8 575.0,424.4 576.0,412.4 577.0,400.2 578.0,388.2 579.0,376.8 580.0,366.3 581.0,357.1 582.0,349.5 583.0,343.7 584.0,339.9 585.0,338.3 586.0,338.8 587.0,341.5 588.0,346.3 589.0,353.1 590.0,361.5 591.0,371.4 592.0,382.4 593.0,394.2 594.0,406.3 595.0,418.5 596.0,430.2 597.0,441.2 598.0,451.0 599.0,459.4 600.0,466.1 601.0,470.8 602.0,473.4 603.0,473.9 604.0,472.2 605.0,468.3 606.0,462.5 607.0,454.8 608.0,445.6 609.0,435.0 610.0,423.6 611.0,411.6 612.0,399.4 613.0,387.4 614.0,376.0 615.0,365.6 616.0,356.5 617.0,349.0 618.0,343.4 619.0,339.7 620.0,338.2 621.0,338.9 622.0,341.8 623.0,346.8 624.0,353.6 625.0,362.2 626.0,372.1 627.0,383.2 628.0,395.0 629.0,407.2 630.0,419.3 631.0,431.0 632.0,441.9 633.0,451.6 634.0,459.9 635.0,466.5 636.0,471.0 637.0,473.5 638.0,473.9 639.0,472.0 640.0,468.0 641.0,462.0 642.0,454.2 643.0,444.9 644.0,434.3 645.0,422.8 646.0,410.7 647.0,398.5 648.0,386.6 649.0,375.2 650.0,364.9 651.0,355.9 652.0,348.6 653.0,343.0 654.0,339.5 655.0,338.2 656.0,339.1 657.0,342.1 658.0,347.2 659.0,354.2 660.0,362.8 661.0,372.9 662.0,384.0 663.0,395.8 664.0,408.0 665.0,420.1 666.0,431.8 667.0,442.6 668.0,452.3 669.0,460.4 670.0,466.8 671.0,471.3 672.0,473.6 673.0,473.8 674.0,471.8 675.0,467.6 676.0,461.5 677.0,453.6 678.0,444.2 679.0,433.5 680.0,421.9 681.0,409.9 682.0,397.7 683.0,385.7 684.0,374.5 685.0,364.2 686.0,355.4 687.0,348.1 688.0,342.7 689.0,339.4 690.0,338.2 691.0,339.2 692.0,342.4 693.0,347.6 694.0,354.7 695.0,363.5 696.0,373.6 697.0,384.8 698.0,396.7 699.0,408.9 700.0,421.0 701.0,432.6 702.0,443.3 703.0,452.9 704.0,460.9 705.0,467.2 706.0,471.5 707.0,473.7 708.0,473.7 709.0,471.6 710.0,467.3 711.0,461.0 712.0,453.0 713.0,443.4 714.0,432.7 715.0,421.1 716.0,409.0 717.0,396.8 718.0,384.9 719.0,373.7 720.0,363.6 721.0,354.8 722.0,347.7 723.0,342.4 724.0,339.2 725.0,338.2 726.0,339.4 727.0,342.7 728.0,348.0 729.0,355.3 730.0,364.1 731.0,374.4" stroke="#dfe38e"/><path d="M37 528.5 H40.5 V578.5 H41.5 V646.5 H42.5 V664.5 H46 L47.2 666.5 L48.4 664.5 H49 L50.2 666.5 L51.4 664.5 H52 L53.2 666.5 L54.4 664.5 H55 L56.2 666.5 L57.4 664.5 H56.5 V613.5 H57.5 V546.5 H58.5 V528.5 V524.5 H59.5 V528.5 H75.5 V578.5 H76.5 V646.5 H77.5 V664.5 H81 L82.2 666.5 L83.4 664.5 H84 L85.2 666.5 L86.4 664.5 H87 L88.2 666.5 L89.4 664.5 H90 L91.2 666.5 L92.4 664.5 H91.5 V613.5 H92.5 V546.5 H93.5 V528.5 H110.5 V578.5 H111.5 V646.5 H112.5 V664.5 H116 L117.2 666.5 L118.4 664.5 H119 L120.2 666.5 L121.4 664.5 H122 L123.2 666.5 L124.4 664.5 H125 L126.2 666.5 L127.4 664.5 H126.5 V613.5 H127.5 V546.5 H128.5 V528.5 H144.5 V578.5 H145.5 V646.5 H146.5 V664.5 H150 L151.2 666.5 L152.4 664.5 H153 L154.2 666.5 L155.4 664.5 H156 L157.2 666.5 L158.4 664.5 H159 L160.2 666.5 L161.4 664.5 H161.5 V613.5 H162.5 V546.5 H163.5 V528.5 H179.5 V578.5 H180.5 V646.5 H181.5 V664.5 H185 L186.2 666.5 L187.4 664.5 H188 L189.2 666.5 L190.4 664.5 H191 L192.2 666.5 L193.4 664.5 H194 L195.2 666.5 L196.4 664.5 H196.5 V613.5 H197.5 V546.5 H198.5 V528.5 H214.5 V578.5 H215.5 V646.5 H216.5 V664.5 H220 L221.2 666.5 L222.4 664.5 H223 L224.2 666.5 L225.4 664.5 H226 L227.2 666.5 L228.4 664.5 H229 L230.2 666.5 L231.4 664.5 H231.5 V613.5 H232.5 V546.5 H233.5 V528.5 V524.5 H234.5 V528.5 H249.5 V578.5 H250.5 V646.5 H251.5 V664.5 H255 L256.2 666.5 L257.4 664.5 H258 L259.2 666.5 L260.4 664.5 H261 L262.2 666.5 L263.4 664.5 H264 L265.2 666.5 L266.4 664.5 H266.5 V613.5 H267.5 V546.5 H268.5 V528.5 H284.5 V578.5 H285.5 V646.5 H286.5 V664.5 H290 L291.2 666.5 L292.4 664.5 H293 L294.2 666.5 L295.4 664.5 H296 L297.2 666.5 L298.4 664.5 H299 L300.2 666.5 L301.4 664.5 H301.5 V613.5 H302.5 V546.5 H303.5 V528.5 H319.5 V578.5 H320.5 V646.5 H321.5 V664.5 H325 L326.2 666.5 L327.4 664.5 H328 L329.2 666.5 L330.4 664.5 H331 L332.2 666.5 L333.4 664.5 H334 L335.2 666.5 L336.4 664.5 H336.5 V613.5 H337.5 V546.5 H338.5 V528.5 H354.5 V578.5 H355.5 V646.5 H356.5 V664.5 H360 L361.2 666.5 L362.4 664.5 H363 L364.2 666.5 L365.4 664.5 H366 L367.2 666.5 L368.4 664.5 H369 L370.2 666.5 L371.4 664.5 H371.5 V613.5 H372.5 V546.5 H373.5 V528.5 H389.5 V578.5 H390.5 V646.5 H391.5 V664.5 H395 L396.2 666.5 L397.4 664.5 H398 L399.2 666.5 L400.4 664.5 H401 L402.2 666.5 L403.4 664.5 H404 L405.2 666.5 L406.4 664.5 H406.5 V613.5 H407.5 V546.5 H408.5 V528.5 H424.5 V578.5 H425.5 V646.5 H426.5 V664.5 H430 L431.2 666.5 L432.4 664.5 H433 L434.2 666.5 L435.4 664.5 H436 L437.2 666.5 L438.4 664.5 H439 L440.2 666.5 L441.4 664.5 H440.5 V613.5 H441.5 V546.5 H442.5 V528.5 V524.5 H443.5 V528.5 H459.5 V578.5 H460.5 V646.5 H461.5 V664.5 H465 L466.2 666.5 L467.4 664.5 H468 L469.2 666.5 L470.4 664.5 H471 L472.2 666.5 L473.4 664.5 H474 L475.2 666.5 L476.4 664.5 H475.5 V613.5 H476.5 V546.5 H477.5 V528.5 H494.5 V578.5 H495.5 V646.5 H496.5 V664.5 H500 L501.2 666.5 L502.4 664.5 H503 L504.2 666.5 L505.4 664.5 H506 L507.2 666.5 L508.4 664.5 H509 L510.2 666.5 L511.4 664.5 H510.5 V613.5 H511.5 V546.5 H512.5 V528.5 H529.5 V578.5 H530.5 V646.5 H531.5 V664.5 H535 L536.2 666.5 L537.4 664.5 H538 L539.2 666.5 L540.4 664.5 H541 L542.2 666.5 L543.4 664.5 H544 L545.2 666.5 L546.4 664.5 H545.5 V613.5 H546.5 V546.5 H547.5 V528.5 H564.5 V578.5 H565.5 V646.5 H566.5 V664.5 H570 L571.2 666.5 L572.4 664.5 H573 L574.2 666.5 L575.4 664.5 H576 L577.2 666.5 L578.4 664.5 H579 L580.2 666.5 L581.4 664.5 H580.5 V613.5 H581.5 V546.5 H582.5 V528.5 H599.5 V578.5 H600.5 V646.5 H601.5 V664.5 H605 L606.2 666.5 L607.4 664.5 H608 L609.2 666.5 L610.4 664.5 H611 L612.2 666.5 L613.4 664.5 H614 L615.2 666.5 L616.4 664.5 H615.5 V613.5 H616.5 V546.5 H617.5 V528.5 H634.5 V578.5 H635.5 V646.5 H636.5 V664.5 H640 L641.2 666.5 L642.4 664.5 H643 L644.2 666.5 L645.4 664.5 H646 L647.2 666.5 L648.4 664.5 H649 L650.2 666.5 L651.4 664.5 H650.5 V613.5 H651.5 V546.5 H652.5 V528.5 H668.5 V578.5 H669.5 V646.5 H670.5 V664.5 H674 L675.2 666.5 L676.4 664.5 H677 L678.2 666.5 L679.4 664.5 H680 L681.2 666.5 L682.4 664.5 H683 L684.2 666.5 L685.4 664.5 H685.5 V613.5 H686.5 V546.5 H687.5 V528.5 H703.5 V578.5 H704.5 V646.5 H705.5 V664.5 H709 L710.2 666.5 L711.4 664.5 H712 L713.2 666.5 L714.4 664.5 H715 L716.2 666.5 L717.4 664.5 H718 L719.2 666.5 L720.4 664.5 H720.5 V613.5 H721.5 V546.5 H722.5 V528.5 H731" stroke="#9ede58"/></g></svg>
<div class="a" style="left:759px;top:92px;width:204px;height:636px;background:#f0f0f0"></div>
<div class="a" style="left:759px;top:92px;width:204px;height:20px;background:linear-gradient(180deg,#dfe4ee,#edf0f6)"></div>
<div class="t" style="left:767px;top:97px;font-size:11.5px;color:#5f6670">Control Panel</div>
<svg class="a" style="left:931px;top:96px" width="11" height="12"><path d="M3 2.5 V7 M7.5 2.5 V7" stroke="#000" stroke-width="1.6" fill="none"/><path d="M2.5 2 H8" stroke="#000" stroke-width="1.6"/><path d="M1.5 7.5 H9" stroke="#000" stroke-width="1.5"/><path d="M5.25 7.5 V11" stroke="#000" stroke-width="1.3"/></svg>
<svg class="a" style="left:948px;top:97px" width="10" height="10"><path d="M1.5 1.5 L8.5 8.5 M8.5 1.5 L1.5 8.5" stroke="#111" stroke-width="1.6"/></svg>
<div class="a" style="left:763px;top:112px;width:200px;height:24px;border:1px solid #6e6e6e;border-radius:3px;background:linear-gradient(180deg,#f6f6f6 0%,#ececec 45%,#e2e2e2 55%,#dadada 100%)"></div>
<div class="t" style="left:767px;top:118px;font-size:12px;color:#111">Scope</div>
<svg class="a" style="left:949px;top:121px" width="10" height="6"><path d="M0.5 0.5 H8.5 L4.5 5 Z" fill="#111"/></svg>
<div class="a" style="left:759px;top:136px;width:204px;height:23px;background:linear-gradient(180deg,#f8f8fb 0%,#ececf2 40%,#c9cbd8 100%)"></div>
<div class="a" style="left:759px;top:159px;width:6px;height:553px;background:linear-gradient(90deg,#f2f0fa,#eef4f0 60%,#f0f0f0)"></div>
<div class="a" style="left:947px;top:159px;width:16px;height:553px;background:linear-gradient(90deg,#e8e8e8,#f4f4f4 40%,#f0f0f0)"></div>
<div class="a" style="left:947px;top:159px;width:1px;height:553px;background:#e2e2e2"></div>
<svg class="a" style="left:950px;top:164px" width="10" height="6"><path d="M1 5 L5 1 L9 5 Z" fill="#555"/></svg>
<svg class="a" style="left:950px;top:699px" width="10" height="6"><path d="M1 1 L5 5 L9 1 Z" fill="#555"/></svg>
<div class="a" style="left:947px;top:177px;width:15px;height:367px;border:1px solid #b8b8b8;border-radius:2px;background:linear-gradient(90deg,#f4f4f4,#e6e6e6 50%,#d6d6d6)"></div>
<svg class="a" style="left:950px;top:355px" width="10" height="9"><path d="M1 1.5 H9 M1 4.5 H9 M1 7.5 H9" stroke="#666" stroke-width="1"/></svg>
<div class="a" style="left:763px;top:711px;width:184px;height:17px;background:linear-gradient(180deg,#e8e8e8,#f4f4f4 40%,#f0f0f0)"></div>
<div class="a" style="left:763px;top:711px;width:184px;height:1px;background:#e2e2e2"></div>
<svg class="a" style="left:767px;top:714px" width="7" height="10"><path d="M5 1 L1 5 L5 9 Z" fill="#555"/></svg>
<svg class="a" style="left:935px;top:714px" width="7" height="10"><path d="M1 1 L5 5 L1 9 Z" fill="#555"/></svg>
<div class="a" style="left:781px;top:712px;width:125px;height:15px;border:1px solid #b8b8b8;border-radius:2px;background:linear-gradient(180deg,#f4f4f4,#e6e6e6 50%,#d6d6d6)"></div>
<svg class="a" style="left:839px;top:715px" width="9" height="9"><path d="M1.5 1 V8 M4.5 1 V8 M7.5 1 V8" stroke="#666" stroke-width="1"/></svg>
<div class="a" style="left:764px;top:159px;width:183px;height:552px;overflow:hidden">
<div class="a" style="left:4px;top:12px;width:179px;height:117px;border:1px solid #d8d8d8;border-right:none;box-shadow:inset 1px 1px 0 #fff"></div><div class="t" style="left:77px;top:7px;font-size:11px;letter-spacing:0.2px;color:#1a1a1a;padding:0 4px;background:#f0f0f0">Horizontal</div>
<div class="a" style="left:4px;top:149px;width:179px;height:283px;border:1px solid #d8d8d8;border-right:none;box-shadow:inset 1px 1px 0 #fff"></div><div class="t" style="left:83px;top:143px;font-size:11px;letter-spacing:0.2px;color:#1a1a1a;padding:0 4px;background:#f0f0f0">Vertical</div>
<div class="a" style="left:4px;top:453px;width:179px;height:148px;border:1px solid #d8d8d8;border-right:none;box-shadow:inset 1px 1px 0 #fff"></div><div class="t" style="left:84px;top:446px;font-size:11px;letter-spacing:0.2px;color:#1a1a1a;padding:0 4px;background:#f0f0f0">Trigger</div>
<div class="t" style="left:14px;top:28px;font-size:10.2px;color:#1a1a1a">Time/DIV</div>
<div class="a" style="left:13px;top:44px;width:74px;height:22px;border:1px solid #8a8a8a;border-radius:3px;background:linear-gradient(180deg,#f4f4f4 0%,#ececec 45%,#dddddd 55%,#d4d4d4 100%)"></div><div class="t" style="left:17px;top:50px;font-size:11px;color:#111">2.000us</div><svg class="a" style="left:75px;top:53px" width="9" height="6"><path d="M0.5 0.5 H7.5 L4 4.5 Z" fill="#111"/></svg>
<div class="t" style="left:14px;top:78px;font-size:10.2px;color:#1a1a1a">Format</div>
<div class="a" style="left:13px;top:96px;width:74px;height:22px;border:1px solid #8a8a8a;border-radius:3px;background:linear-gradient(180deg,#f4f4f4 0%,#ececec 45%,#dddddd 55%,#d4d4d4 100%)"></div><div class="t" style="left:17px;top:102px;font-size:11px;color:#444">Y-T</div><svg class="a" style="left:75px;top:105px" width="9" height="6"><path d="M0.5 0.5 H7.5 L4 4.5 Z" fill="#111"/></svg>
<div class="a" style="left:13px;top:167px;width:12px;height:12px;border:1px solid #8e8f8f;background:linear-gradient(135deg,#dcdcdc,#fbfbfb)"></div><svg class="a" style="left:13px;top:167px" width="12" height="12"><path d="M3 5.5 L5 9 L9.5 2.5" fill="none" stroke="#4a5f97" stroke-width="1.6"/></svg>
<div class="t" style="left:29px;top:168px;font-size:10.5px;color:#1a1a1a">CH1</div>
<div class="a" style="left:13px;top:187px;width:74px;height:22px;border:1px solid #8a8a8a;border-radius:3px;background:linear-gradient(180deg,#f4f4f4 0%,#ececec 45%,#dddddd 55%,#d4d4d4 100%)"></div><div class="t" style="left:17px;top:193px;font-size:11px;color:#111">1.00V</div><svg class="a" style="left:75px;top:196px" width="9" height="6"><path d="M0.5 0.5 H7.5 L4 4.5 Z" fill="#111"/></svg>
<div class="a" style="left:13px;top:257px;width:74px;height:22px;border:1px solid #8a8a8a;border-radius:3px;background:linear-gradient(180deg,#f4f4f4 0%,#ececec 45%,#dddddd 55%,#d4d4d4 100%)"></div><div class="t" style="left:17px;top:263px;font-size:11px;color:#111">x1</div><svg class="a" style="left:75px;top:266px" width="9" height="6"><path d="M0.5 0.5 H7.5 L4 4.5 Z" fill="#111"/></svg>
<div class="a" style="left:124px;top:265px;width:12px;height:12px;border:1px solid #8e8f8f;background:linear-gradient(135deg,#dcdcdc,#fbfbfb)"></div>
<div class="t" style="left:140px;top:266px;font-size:10.5px;color:#1a1a1a">Invert</div>
<div class="a" style="left:13px;top:307px;width:12px;height:12px;border:1px solid #8e8f8f;background:linear-gradient(135deg,#dcdcdc,#fbfbfb)"></div><svg class="a" style="left:13px;top:307px" width="12" height="12"><path d="M3 5.5 L5 9 L9.5 2.5" fill="none" stroke="#4a5f97" stroke-width="1.6"/></svg>
<div class="t" style="left:29px;top:308px;font-size:10.5px;color:#1a1a1a">CH2</div>
<div class="a" style="left:13px;top:327px;width:74px;height:22px;border:1px solid #8a8a8a;border-radius:3px;background:linear-gradient(180deg,#f4f4f4 0%,#ececec 45%,#dddddd 55%,#d4d4d4 100%)"></div><div class="t" style="left:17px;top:333px;font-size:11px;color:#111">1.00V</div><svg class="a" style="left:75px;top:336px" width="9" height="6"><path d="M0.5 0.5 H7.5 L4 4.5 Z" fill="#111"/></svg>
<div class="a" style="left:13px;top:397px;width:74px;height:22px;border:1px solid #8a8a8a;border-radius:3px;background:linear-gradient(180deg,#f4f4f4 0%,#ececec 45%,#dddddd 55%,#d4d4d4 100%)"></div><div class="t" style="left:17px;top:403px;font-size:11px;color:#111">x1</div><svg class="a" style="left:75px;top:406px" width="9" height="6"><path d="M0.5 0.5 H7.5 L4 4.5 Z" fill="#111"/></svg>
<div class="a" style="left:124px;top:405px;width:12px;height:12px;border:1px solid #8e8f8f;background:linear-gradient(135deg,#dcdcdc,#fbfbfb)"></div>
<div class="t" style="left:140px;top:406px;font-size:10.5px;color:#1a1a1a">Invert</div>
<div class="t" style="left:16px;top:479px;font-size:11px;color:#1a1a1a">Trigger Mode</div>
<div class="a" style="left:113px;top:474px;width:74px;height:22px;border:1px solid #8a8a8a;border-radius:3px;background:linear-gradient(180deg,#f4f4f4 0%,#ececec 45%,#dddddd 55%,#d4d4d4 100%)"></div><div class="t" style="left:117px;top:480px;font-size:11px;color:#111">Edge</div><svg class="a" style="left:175px;top:483px" width="9" height="6"><path d="M0.5 0.5 H7.5 L4 4.5 Z" fill="#111"/></svg>
<div class="t" style="left:16px;top:514px;font-size:11.2px;color:#1a1a1a">Trigger Sweep</div>
<div class="a" style="left:113px;top:509px;width:74px;height:22px;border:1px solid #8a8a8a;border-radius:3px;background:linear-gradient(180deg,#f4f4f4 0%,#ececec 45%,#dddddd 55%,#d4d4d4 100%)"></div><div class="t" style="left:117px;top:515px;font-size:11px;color:#111">AUTO</div><svg class="a" style="left:175px;top:518px" width="9" height="6"><path d="M0.5 0.5 H7.5 L4 4.5 Z" fill="#111"/></svg>
<div class="t" style="left:16px;top:549px;font-size:11px;color:#1a1a1a">Trigger Source</div>
<div class="a" style="left:113px;top:544px;width:74px;height:22px;border:1px solid #8a8a8a;border-radius:3px;background:linear-gradient(180deg,#f4f4f4 0%,#ececec 45%,#dddddd 55%,#d4d4d4 100%)"></div><div class="t" style="left:117px;top:550px;font-size:11px;color:#111">CH1</div><svg class="a" style="left:175px;top:553px" width="9" height="6"><path d="M0.5 0.5 H7.5 L4 4.5 Z" fill="#111"/></svg>
</div>
<svg class="a" style="left:866.5px;top:191px" width="90" height="90" viewBox="866.5 191 90 90"><path d="M885.62 261.88 A36.6 36.6 0 1 1 937.38 261.88" fill="none" stroke="#111" stroke-width="1"/><circle cx="911.5" cy="236" r="30.9" fill="none" stroke="#c6c6c0" stroke-width="5.2"/><circle cx="911.5" cy="236" r="33.6" fill="none" stroke="#111" stroke-width="1"/><circle cx="911.5" cy="236" r="28" fill="#2010cc" stroke="#141414" stroke-width="1"/><path d="M890.3 257.2 L881.1 266.4" stroke="#111" stroke-width="1.1"/><path d="M932.7 257.2 L941.9 266.4" stroke="#111" stroke-width="1.1"/><path d="M931.7 215.8 L934.8 212.7" stroke="#333" stroke-width="1.3"/><path d="M916.6 233.7 L933.6 228.7" stroke="#f4eeff" stroke-width="1.7"/></svg>
<svg class="a" style="left:866.5px;top:326.4px" width="90" height="90" viewBox="866.5 326.4 90 90"><path d="M885.62 397.28 A36.6 36.6 0 1 1 937.38 397.28" fill="none" stroke="#111" stroke-width="1"/><circle cx="911.5" cy="371.4" r="30.9" fill="none" stroke="#c6c6c0" stroke-width="5.2"/><circle cx="911.5" cy="371.4" r="33.6" fill="none" stroke="#111" stroke-width="1"/><circle cx="911.5" cy="371.4" r="28" fill="#f8f840" stroke="#141414" stroke-width="1"/><path d="M890.3 392.6 L881.1 401.8" stroke="#111" stroke-width="1.1"/><path d="M932.7 392.6 L941.9 401.8" stroke="#111" stroke-width="1.1"/><path d="M931.7 351.2 L934.8 348.1" stroke="#333" stroke-width="1.3"/><path d="M896 359 L907 366" stroke="#ece8b8" stroke-width="1.7"/></svg>
<svg class="a" style="left:866.5px;top:468.20000000000005px" width="90" height="90" viewBox="866.5 468.20000000000005 90 90"><path d="M885.62 539.08 A36.6 36.6 0 1 1 937.38 539.08" fill="none" stroke="#111" stroke-width="1"/><circle cx="911.5" cy="513.2" r="30.9" fill="none" stroke="#c6c6c0" stroke-width="5.2"/><circle cx="911.5" cy="513.2" r="33.6" fill="none" stroke="#111" stroke-width="1"/><circle cx="911.5" cy="513.2" r="28" fill="#90f030" stroke="#141414" stroke-width="1"/><path d="M890.3 534.4 L881.1 543.6" stroke="#111" stroke-width="1.1"/><path d="M932.7 534.4 L941.9 543.6" stroke="#111" stroke-width="1.1"/><path d="M931.7 493.0 L934.8 489.9" stroke="#333" stroke-width="1.3"/><path d="M894 500.5 L906.5 509" stroke="#d8f4c0" stroke-width="1.7"/></svg>
<div class="a" style="left:8px;top:728px;width:955px;height:19px;background:linear-gradient(180deg,#f2f2f2,#eeeeee)"></div>
<div class="a" style="left:8px;top:728px;width:955px;height:1px;background:#d8d8d8"></div>
<div class="t" style="left:12px;top:734px;font-size:12px;color:#111">Running...</div>
<div class="t" style="left:841px;top:734px;font-size:11px;color:#111">14-03-2017  08:57</div>
<svg class="a" style="left:951px;top:735px" width="11" height="11"><path d="M8 2h1.5v1.5h-1.5z M5 5h1.5v1.5h-1.5z M8 5h1.5v1.5h-1.5z M2 8h1.5v1.5h-1.5z M5 8h1.5v1.5h-1.5z M8 8h1.5v1.5h-1.5z" fill="#b0b0b0"/></svg>
<svg class="a" style="left:15px;top:273px" width="20" height="14"><path d="M1.5 1.5 H12 L17 7 L12 12.5 H1.5 Z" fill="#8a1cf8" stroke="#2a1050" stroke-width="1"/><text x="3" y="11" font-size="10" font-family="Liberation Sans" fill="#900050">M</text></svg>
<svg class="a" style="left:15px;top:401px" width="20" height="14"><path d="M1.5 1.5 H12 L17 7 L12 12.5 H1.5 Z" fill="#f2f030" stroke="#1a1a10" stroke-width="1"/><text x="6" y="11" font-size="10" font-family="Liberation Sans" fill="#000">1</text></svg>
<svg class="a" style="left:15px;top:591px" width="20" height="14"><path d="M1.5 1.5 H12 L17 7 L12 12.5 H1.5 Z" fill="#88f030" stroke="#1a2a10" stroke-width="1"/><text x="5.5" y="11" font-size="10" font-family="Liberation Sans" fill="#000">2</text></svg>
<svg class="a" style="left:734px;top:434px" width="19" height="14"><path d="M1 6.5 L6 1 H18 V12 H6 Z" fill="#f2ee30"/><text x="7" y="10.5" font-size="10" font-weight="bold" font-family="Liberation Sans" fill="#333">T</text></svg></body></html>
